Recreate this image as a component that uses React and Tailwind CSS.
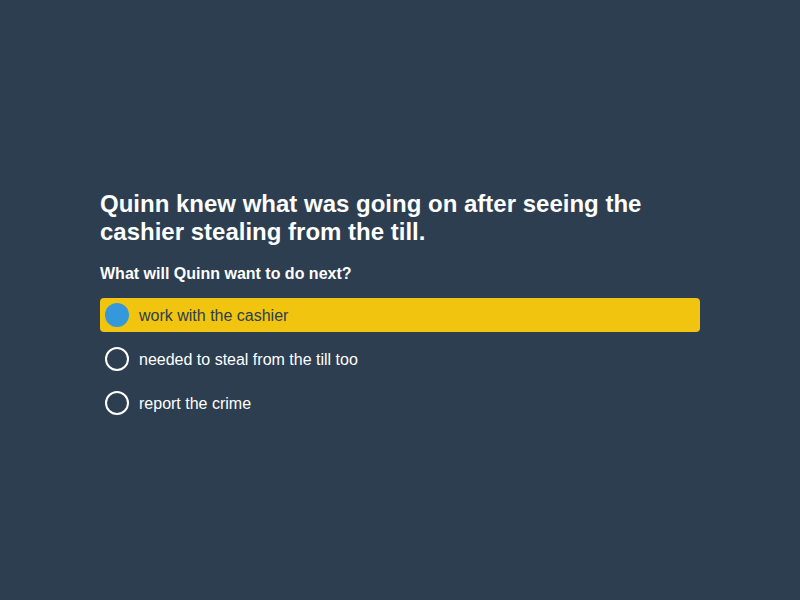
import React from 'react';

const options = [
    'work with the cashier',
    'needed to steal from the till too',
    'report the crime',
];

export default function App() {
    const selected = 0;

    return (
        <div className="w-[800px] h-[600px] bg-[#2c3e50] flex items-center justify-center pt-[8px] font-['Liberation_Sans',Arial,sans-serif]">
            <div className="w-[600px]">
                <h1 className="text-[24px] leading-[28px] font-bold text-white pt-[2px] mb-[18px]">
                    Quinn knew what was going on after seeing the cashier stealing from the till.
                </h1>
                <p className="text-[16px] leading-[20px] font-bold text-white mb-[14px]">What will Quinn want to do next?</p>
                <div className="flex flex-col gap-[10px]">
                    {options.map((opt, i) => (
                        <div
                            key={i}
                            className={`flex items-center h-[34px] px-[5px] rounded-[4px] ${i === selected ? 'bg-[#f1c40f] text-[#2c3e50]' : 'text-white'}`}
                        >
                            {i === selected ? (
                                <span className="w-[24px] h-[24px] rounded-full bg-[#3498db]" />
                            ) : (
                                <span className="w-[24px] h-[24px] rounded-full border-2 border-white" />
                            )}
                            <span className="ml-[10px] text-[16px] pt-[2px]">{opt}</span>
                        </div>
                    ))}
                </div>
            </div>
        </div>
    );
}
